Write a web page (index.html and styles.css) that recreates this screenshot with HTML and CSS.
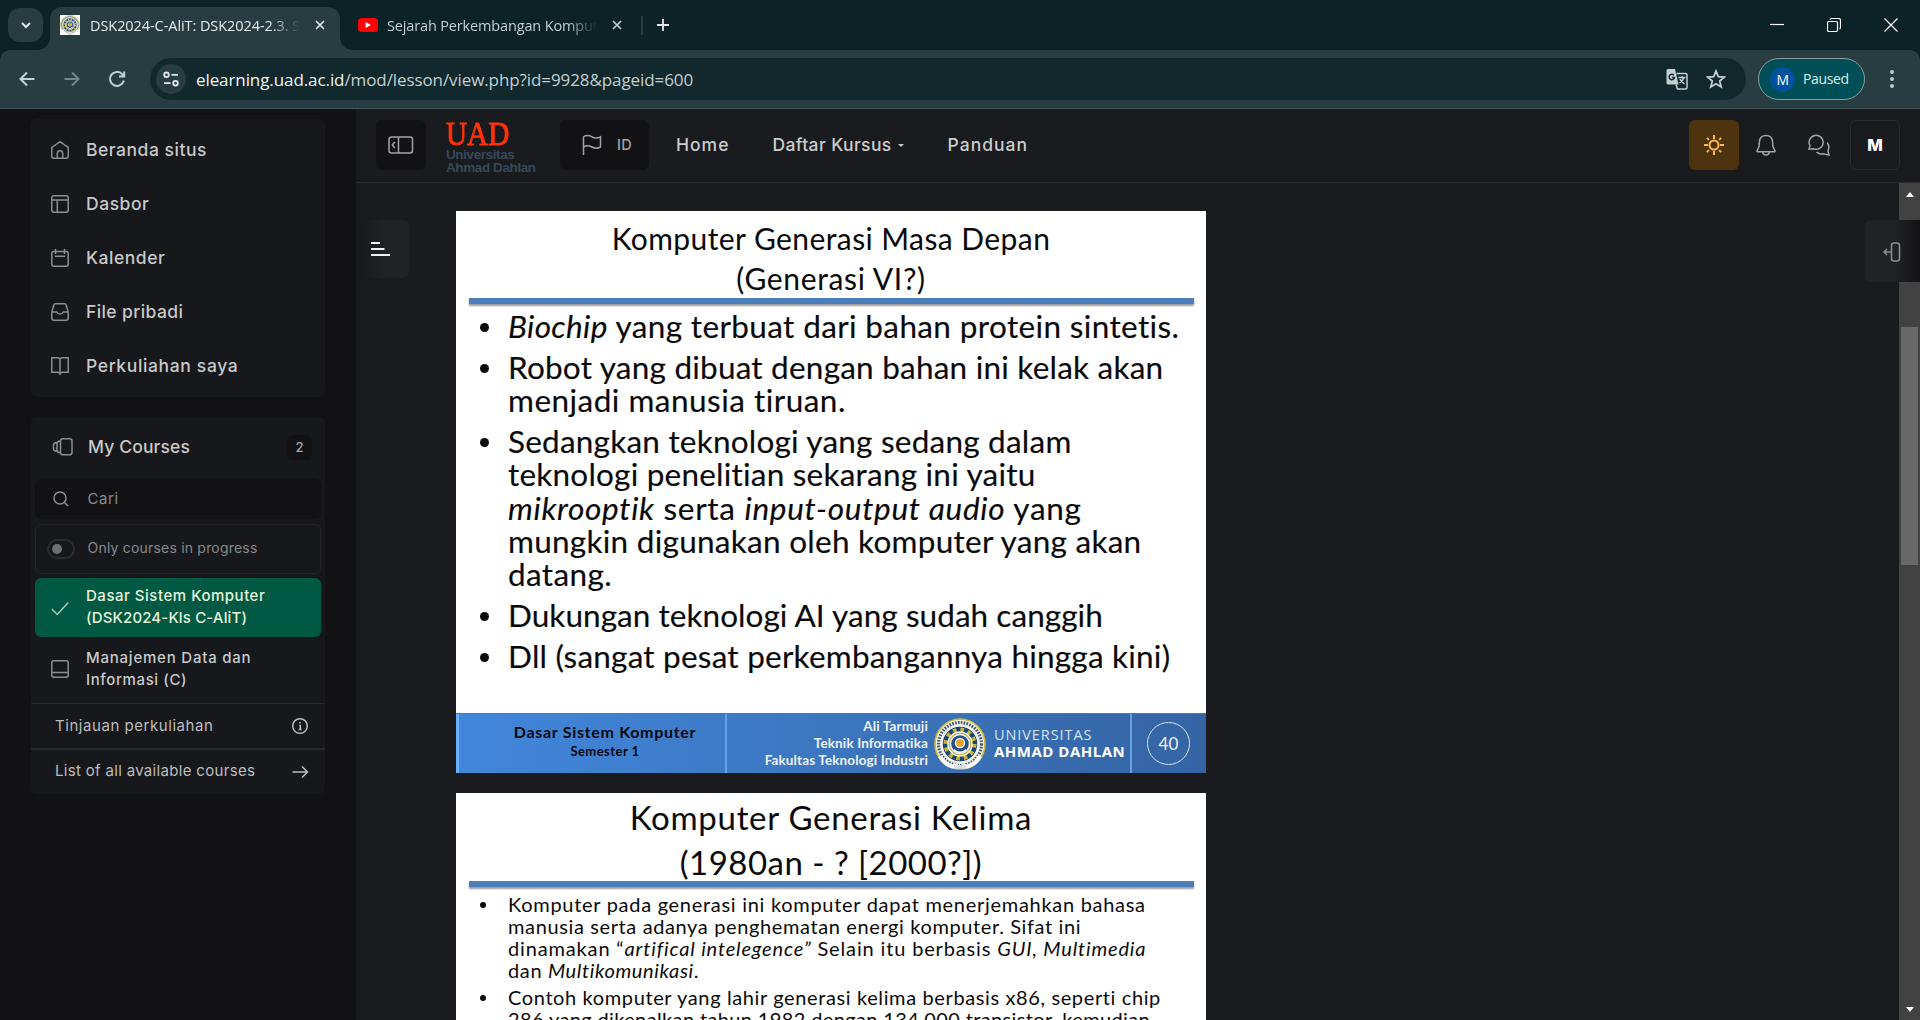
FILE: index.html
```html
<!DOCTYPE html>
<html lang="id">
<head>
<meta charset="utf-8">
<title>DSK2024-C-AliT: DSK2024-2.3.</title>
<link rel="stylesheet" href="styles.css">
</head>
<body>
<svg class="defs" width="0" height="0">
  <symbol id="emblem" viewBox="0 0 52 52">
    <circle cx="26" cy="26" r="25" fill="#f4f3df" stroke="#c9b93c" stroke-width="1.6"/>
    <circle cx="26" cy="26" r="21.5" fill="none" stroke="#3c5580" stroke-width="3.2" stroke-dasharray="1.6 1.3"/>
    <circle cx="26" cy="26" r="18" fill="#1d4370"/>
    <circle cx="26" cy="26" r="14" fill="none" stroke="#c9b534" stroke-width="5" stroke-dasharray="3.5 3.83"/>
    <circle cx="26" cy="26" r="12" fill="#c9b534"/>
    <circle cx="26" cy="26" r="9.5" fill="#23508a"/>
    <circle cx="26" cy="25" r="4.5" fill="#e9a21c"/>
    <path d="M20 31q6 5 12 0v2q-6 4-12 0z" fill="#fff" stroke="none"/>
    <path d="M6 38q5 10 16 11v-3M46 38q-5 10-16 11v-3" fill="none" stroke="#fff" stroke-width="4"/>
    <path d="M20 47h12v4H20z" fill="#d8dde4" stroke="none"/>
  </symbol>
</svg>
<div class="tabs">
  <div class="tabsearch"><svg width="12" height="12" viewBox="0 0 12 12"><path d="M2 4l4 4 4-4"/></svg></div>
  <div class="tab active">
    <svg class="fav" width="20" height="20" viewBox="0 0 52 52"><path fill="#fff" stroke="none" d="M0 0h52v52H0z"/><use href="#emblem"/></svg>
    <span class="title"><span class="t">DSK2024-C-AliT: DSK2024-2.3. S</span></span>
    <svg class="x" width="10" height="10" viewBox="0 0 10 10"><path d="M1 1l8 8M9 1L1 9"/></svg>
  </div>
  <div class="tab">
    <svg class="fav" width="20" height="14" viewBox="0 0 20 14"><rect width="20" height="14" rx="3.5" fill="#f00" stroke="none"/><path d="M7.6 4v6L13 7z" fill="#fff" stroke="none"/></svg>
    <span class="title"><span class="t">Sejarah Perkembangan Komput</span></span>
    <svg class="x" width="10" height="10" viewBox="0 0 10 10"><path d="M1 1l8 8M9 1L1 9"/></svg>
  </div>
  <i class="tabsep"></i>
  <svg class="plus" width="14" height="14" viewBox="0 0 14 14"><path d="M7 1v12M1 7h12"/></svg>
  <div class="win">
    <svg width="14" height="14" viewBox="0 0 14 14"><path d="M0 6.5h14"/></svg>
    <svg width="14" height="14" viewBox="0 0 14 14"><rect x=".5" y="3.5" width="10" height="10" rx="1.5"/><path d="M3 1.5Q3.500.5 5 .5h6.500q2 0 2 2V9q0 1.500-1 2"/></svg>
    <svg width="14" height="14" viewBox="0 0 14 14"><path d="M.5.5l13 13M13.500.5l-13 13"/></svg>
  </div>
</div>
<div class="toolbar">
  <svg class="nav" width="20" height="20" viewBox="0 0 20 20"><path d="M17.500 10H3.500M10 3.500L3.500 10l6.500 6.500"/></svg>
  <svg class="nav dim" width="20" height="20" viewBox="0 0 20 20"><path d="M2.500 10h14M10 3.500l6.500 6.500-6.500 6.500"/></svg>
  <svg class="nav" width="20" height="20" viewBox="0 0 20 20"><path d="M16.800 11.500a7 7 0 1 1-1.600-6.300l1.800 1.800M17.200 2.500V7.500H12"/></svg>
  <div class="omni">
    <span class="site"><svg width="16" height="16" viewBox="0 0 16 16"><circle cx="3.500" cy="3.800" r="2.300"/><circle cx="12.500" cy="12.200" r="2.300"/><path d="M8.500 3.800H15M1 12.200h6.500"/></svg></span>
    <span class="url"><span class="t"><b>elearning.uad.ac.id</b>/mod/lesson/view.php?id=9928&amp;pageid=600</span></span>
    <svg class="trans" width="22" height="22" viewBox="0 0 22 22"><path d="M2 1h7l3.500 15.500H2q-1.500 0-1.500-1.500V2.500Q.5 1 2 1z" fill="#c4cfd1" stroke="none"/><path d="M10.500 5.500h9q1.500 0 1.500 1.500v12.500q0 1.500-1.500 1.500h-8l-1.500-4.500M12.500 9.500h7M16 8v1.500M18 9.500q-1 3-4.500 5.500M14 11q1 2.500 4.500 5"/><path class="g" d="M7.800 7.200A2.700 2.700 0 1 0 8.500 9.500H6"/></svg>
    <svg class="star" width="20" height="20" viewBox="0 0 20 20"><path d="M10 2l2.300 5.600 6 .5-4.600 3.900 1.400 5.900L10 14.700l-5.100 3.200 1.400-5.900L1.700 8.100l6-.5z"/></svg>
  </div>
  <div class="profile"><i>M</i><span class="t">Paused</span></div>
  <div class="dots"><i></i><i></i><i></i></div>
</div>
<div class="page">
  <aside>
    <nav class="card menu">
      <a><svg width="20" height="20" viewBox="0 0 20 20"><path d="M1.800 7.500L10 1.600l8.200 5.900v8.800q0 1.900-1.900 1.900H3.700q-1.900 0-1.900-1.900zM7.300 18v-4.500a2.700 2.700 0 0 1 5.400 0V18"/></svg><span class="t">Beranda situs</span></a>
      <a><svg width="20" height="20" viewBox="0 0 20 20"><rect x="1.800" y="1.800" width="16.400" height="16.400" rx="1.900"/><path d="M1.800 6h16.400M7.300 6v12"/></svg><span class="t">Dasbor</span></a>
      <a><svg width="20" height="20" viewBox="0 0 20 20"><rect x="1.800" y="3.400" width="16.400" height="14.800" rx="1.900"/><path d="M5.500 1v5M14.500 1v5M5 8.300h10"/></svg><span class="t">Kalender</span></a>
      <a><svg width="20" height="20" viewBox="0 0 20 20"><path d="M1.800 10l2-6.800q.4-1.400 1.800-1.400h8.800q1.400 0 1.800 1.400l2 6.800v6.300q0 1.900-1.900 1.900H3.700q-1.900 0-1.900-1.900zM1.800 10h5q1 2 3.200 2t3.200-2h5"/></svg><span class="t">File pribadi</span></a>
      <a><svg width="20" height="20" viewBox="0 0 20 20"><path d="M10 3v16M10 3q-1-1.200-2.500-1.200H1.800v14.500h5.700q1.800 0 2.500 1.500.7-1.500 2.500-1.500h5.700V1.800h-5.700Q11 1.800 10 3z"/></svg><span class="t">Perkuliahan saya</span></a>
    </nav>
    <section class="card courses">
      <h2><svg width="22" height="20" viewBox="0 0 22 20"><rect x="8.500" y="1.800" width="11.500" height="16" rx="2.200"/><path d="M8.500 4q-3.500 0-3.500 2.500v6.700q0 2.500 3.500 2.500M5 5.500q-3.500.2-3.500 2.500v3.800q0 2.300 3.500 2.500"/></svg><span class="t">My Courses</span><em>2</em></h2>
      <div class="search"><svg width="18" height="18" viewBox="0 0 18 18"><circle cx="8" cy="8" r="6"/><path d="M12.500 12.500L16 16"/></svg><span class="t">Cari</span></div>
      <div class="only"><i></i><span class="t">Only courses in progress</span></div>
      <a class="course on"><svg width="20" height="20" viewBox="0 0 20 20"><path d="M1.800 11l5.500 5.500L18.200 4.500"/></svg><span><span class="t">Dasar Sistem Komputer</span><span class="t">(DSK2024-Kls C-AliT)</span></span></a>
      <a class="course"><svg width="20" height="20" viewBox="0 0 20 20"><rect x="1.800" y="1.800" width="16.400" height="16.400" rx="1.900"/><path d="M1.800 13.500h16.400"/></svg><span><span class="t">Manajemen Data dan</span><span class="t">Informasi (C)</span></span></a>
      <a class="link"><span class="t">Tinjauan perkuliahan</span><svg width="18" height="18" viewBox="0 0 18 18"><circle cx="9" cy="9" r="7.300"/><path d="M8.300 8.500h1v4M9 5v1.600M7.600 12.500h3"/></svg></a>
      <a class="link last"><span class="t">List of all available courses</span><svg width="18" height="18" viewBox="0 0 18 18"><path d="M1.500 9h15M11 3.500L16.500 9 11 14.500"/></svg></a>
    </section>
  </aside>
  <main>
    <header>
      <div class="btn side"><svg width="26" height="18" viewBox="0 0 26 18"><rect x="1" y="1" width="23.500" height="16" rx="2.500"/><path d="M10.500 1v16M6.800 6L4.300 9l2.500 3"/></svg></div>
      <div class="logo"><b>UAD</b><span class="t">Universitas</span><span class="t">Ahmad Dahlan</span></div>
      <div class="btn lang"><svg width="20" height="22" viewBox="0 0 20 22"><path d="M1.500 21V2.800q4-2.500 8.500 0t8.500 0V13q-4 2.500-8.500 0t-8.500 0"/></svg><span class="t">ID</span></div>
      <span class="t home">Home</span>
      <span class="t daftar">Daftar Kursus</span><i class="caret"></i>
      <span class="t panduan">Panduan</span>
      <div class="right">
        <div class="sun"><svg width="22" height="22" viewBox="0 0 22 22"><circle cx="11" cy="11" r="4.500"/><path d="M11 1v4M11 17v4M1 11h4M17 11h4M3.900 3.900l2 2M16.100 16.100l2 2M3.900 18.100l2-2M16.100 5.900l2-2"/></svg></div>
        <svg class="bell" width="22" height="22" viewBox="0 0 22 22"><path d="M11 1.500q-6 0-6.500 6L4 12.500l-2 4.500q-.3.800.7.800h16.600q1 0 .7-.8l-2-4.500-.5-5q-.5-6-6.500-6zM7.500 18q.5 3 3.500 3t3.500-3"/></svg>
        <svg class="chat" width="22" height="22" viewBox="0 0 22 22"><path d="M1 15.200l1-3.600a7 7 0 1 1 3.400 3.100zM8.500 18q3 2.700 6.500 1.800l6 1.200-1-4q2-4.500-.8-8.500"/></svg>
        <div class="me">M</div>
      </div>
    </header>
    <div class="body">
      <div class="content">
        <article class="slide one">
          <h1><span class="t">Komputer Generasi Masa Depan</span><span class="t">(Generasi VI?)</span></h1>
          <hr>
          <ul>
            <li><p><span class="t a"><em>Biochip</em> yang terbuat dari bahan protein sintetis.</span></p></li>
            <li><p><span class="t b">Robot yang dibuat dengan bahan ini kelak akan</span><span class="t c">menjadi manusia tiruan.</span></p></li>
            <li><p><span class="t b">Sedangkan teknologi yang sedang dalam</span><span class="t b">teknologi penelitian sekarang ini yaitu</span><span class="t d"><em>mikrooptik</em> serta <em>input-output audio</em> yang</span><span class="t e">mungkin digunakan oleh komputer yang akan</span><span class="t a">datang.</span></p></li>
            <li><p><span class="t f">Dukungan teknologi AI yang sudah canggih</span></p></li>
            <li><p><span class="t b">Dll (sangat pesat perkembangannya hingga kini)</span></p></li>
          </ul>
          <footer>
            <div class="subject"><span class="t">Dasar Sistem Komputer</span><small>Semester 1</small></div>
            <div class="org">
              <div class="who"><span class="t">Ali Tarmuji</span><span class="t">Teknik Informatika</span><span class="t">Fakultas Teknologi Industri</span></div>
              <svg width="52" height="52"><use href="#emblem"/></svg>
              <div class="uni"><span class="t">UNIVERSITAS</span><b class="t">AHMAD DAHLAN</b></div>
            </div>
            <div class="num"><i>40</i></div>
          </footer>
        </article>
        <article class="slide two">
          <h1><span class="t">Komputer Generasi Kelima</span><span class="t">(1980an - ? [2000?])</span></h1>
          <hr>
          <ul>
            <li><p><span class="t a">Komputer pada generasi ini komputer dapat menerjemahkan bahasa</span><span class="t b">manusia serta adanya penghematan energi komputer. Sifat ini</span><span class="t c">dinamakan “<em>artifical intelegence”</em> Selain itu berbasis <em>GUI, Multimedia</em></span><span class="t b">dan <em>Multikomunikasi</em>.</span></p></li>
            <li><p><span class="t b">Contoh komputer yang lahir generasi kelima berbasis x86, seperti chip</span><span class="t d">286 yang dikenalkan tahun 1982 dengan 134.000 transistor, kemudian</span></p></li>
          </ul>
        </article>
      </div>
      <div class="scroll"><i class="up"></i><i class="thumb"></i><i class="down"></i></div>
    </div>
    <div class="drawer left"><svg width="20" height="14" viewBox="0 0 20 14"><path d="M0 1h9M0 7h13.500M0 13h19"/></svg></div>
    <div class="drawer rgt"><svg width="18" height="20" viewBox="0 0 18 20"><rect x="8.500" y="1" width="8" height="18" rx="2.500"/><path d="M8 10H1M4 7l-3 3 3 3"/></svg></div>
  </main>
</div>
</body>
</html>
```
FILE: styles.css
```css
*{box-sizing:border-box}
body{margin:0;width:1920px;height:1020px;overflow:hidden;background:#0b2226;font-family:Inter,"Liberation Sans",sans-serif;color:#c9c9c9}
svg{fill:none;stroke:currentColor;stroke-width:1.5;flex:none;display:block}
p{margin:0}
.t{white-space:pre;display:block;width:max-content}
i,em{font-style:normal}
.defs{position:absolute}

/* browser tab strip */
.tabs{height:50px;display:flex;align-items:flex-start;font:14.5px "Open Sans",sans-serif;color:#e3e9ea;padding-left:8px}
.tabsearch{width:35px;height:34px;margin:8px 7px 0 0;border-radius:12px;background:#283d41;display:flex;align-items:center;justify-content:center}
.tabsearch svg{stroke-width:2}
.tab{height:43px;margin-top:7px;display:flex;align-items:center;padding-left:10px;width:290px;padding-bottom:7px;position:relative;letter-spacing:-.07px}
.tab.active{background:#283d41;border-radius:12px 12px 0 0}
.tab.active:before,.tab.active:after{content:"";position:absolute;bottom:0;width:12px;height:12px}
.tab.active:before{left:-12px;background:radial-gradient(circle at 0 0,transparent 11.5px,#283d41 12px)}
.tab.active:after{right:-12px;background:radial-gradient(circle at 100% 0,transparent 11.5px,#283d41 12px)}
.tab+.tab{padding-left:18px;width:301px;color:#bfd0d3;letter-spacing:-.15px}
.title{width:210px;margin:0 15px 0 10px;overflow:hidden;-webkit-mask:linear-gradient(90deg,#000 180px,transparent 210px);mask:linear-gradient(90deg,#000 180px,transparent 210px)}
.tab+.tab .title{margin-left:9px}
.x{stroke-width:1.7}
.tabsep{width:2px;height:19px;background:#283d41;margin-top:16px}
.plus{margin:18px 0 0 13px;stroke-width:1.8}
.win{margin:18px 22px 0 auto;display:flex;gap:43px;color:#fff}
.win svg{stroke-width:1.2}

/* browser toolbar */
.toolbar{height:59px;background:#283d41;border-bottom:1px solid #45575a;border-radius:10px 10px 0 0;display:flex;align-items:center;padding-left:17px;color:#c4cfd1}
.nav{margin-right:25px;stroke-width:2;color:#c0d4d7}
.nav.dim{color:#71858a}
.omni{width:1596px;height:42px;margin-left:-2px;border-radius:21px;background:#11292d;display:flex;align-items:center;padding:0 20px 0 6px}
.site{width:30px;height:30px;border-radius:50%;background:#283d41;display:flex;align-items:center;justify-content:center;margin-right:10px;color:#e3e9ea}
.site svg{stroke-width:1.8}
.url{font:17px "Open Sans",sans-serif;letter-spacing:-.09px;flex:1;color:#c3cfd1}
.url b{font-weight:400;color:#f1f5f5}
.trans{margin-right:1px}
.g{stroke:#11292d;stroke-width:1.5}
.star{margin-left:17px;stroke-width:1.8}
.profile{width:107px;height:42px;margin-left:12px;border:1px solid #899da0;border-radius:21px;background:#004f56;display:flex;align-items:center;padding-left:11px;gap:8px;font:14px "Open Sans",sans-serif;letter-spacing:-.35px;color:#d5eef0}
.profile i{width:25px;height:25px;border-radius:50%;background:#00529e;color:#fff;display:flex;align-items:center;justify-content:center}
.profile .t{margin-top:-2px}
.dots{margin-left:25px;display:grid;gap:3px}
.dots i{width:4px;height:4px;border-radius:50%;background:#bccbcd}

/* site sidebar */
.page{display:flex;height:911px;background:#121214}
aside{width:356px;padding:10px 31px;flex:none}
.card{background:#17181b;border-radius:6px}
.menu{height:278px;padding:4px 21px;margin-bottom:20px}
.menu a{height:54px;display:flex;align-items:center;gap:15px;font-size:17.5px;letter-spacing:.53px;font-weight:500;color:#c8c8c9}
.menu a:nth-child(4){letter-spacing:.4px}
.menu a:nth-child(5){letter-spacing:.64px}
.menu .t,h2 .t{margin-top:-2px}
.card svg{color:#8e8e90}
.menu svg{margin-left:-2px;margin-right:1px}
.courses{height:377px;padding:0 4px}
h2{margin:0;height:62px;display:flex;align-items:center;padding:0 9px 2px 17px;gap:14px;font-size:17.5px;letter-spacing:.14px;font-weight:500}
h2 em{margin-left:auto;width:25px;height:25px;border-radius:6px;background:#121214;font-size:13px;color:#a5a5a7;display:flex;align-items:center;justify-content:center}
.search{height:40px;border-radius:6px;background:#121214;display:flex;align-items:center;padding:0 0 1px 17px;gap:17.5px;font-size:15px;letter-spacing:.6px;color:#8b8b8d}
.only{height:50px;border:1px solid #232427;border-radius:6px;margin:5px 0 4px;display:flex;align-items:center;padding:0 0 1px 11px;gap:12.5px;font-size:14px;letter-spacing:.2px;color:#88888a}
.only .t{margin-top:-2px}
.only i{width:28px;height:20px;border:2px solid #2c2d30;border-radius:10px;padding:3px}
.only i:before{content:"";display:block;width:10px;height:10px;border-radius:50%;background:#6f6f70}
.course{height:59px;display:flex;align-items:center;padding-left:15px;gap:16px;font-size:15px;line-height:22px;letter-spacing:.78px;font-weight:500;border-radius:6px}
.course .t+.t{letter-spacing:.62px}
.course.on{background:#005943;color:#e8f3d9;margin-bottom:2px;letter-spacing:.52px}
.course.on .t+.t{letter-spacing:.14px}
.course.on svg{color:#a8cdb5}
.course.on>span{margin-top:-1px}
.link{margin:5px -4px 0;height:45px;border-top:1px solid #26272a;display:flex;align-items:center;justify-content:space-between;padding:0 16px 0 24px;font-size:15px;letter-spacing:.55px;color:#bdbdbe}
.link .t{margin-top:-2px}
.link svg{color:#bdbdbe}
.link.last{margin-top:0;border-top:2px solid #26272a;letter-spacing:.32px}

/* site header */
main{flex:1;background:#1a1b1f;display:flex;flex-direction:column;position:relative}
header{height:74px;border-bottom:1px solid #2b2d31;display:flex;align-items:center;padding:0 0 1px 20px;font-size:17.5px;letter-spacing:1px;font-weight:500;color:#cbcbcc;flex:none}
header>.t,.lang .t{margin-top:-2px}
.btn{height:50px;background:#121214;border-radius:6px;display:flex;align-items:center;color:#a2a2a5}
.side{width:50px;padding-left:12px}
.logo{width:114px;margin-left:20px;font:700 13.5px/12.5px "Liberation Sans",sans-serif;color:#384857;letter-spacing:-.4px;padding-top:3px}
.logo b{display:block;width:max-content;font:34px/30px "Liberation Serif",serif;letter-spacing:0;color:#ff3209;-webkit-text-stroke:.9px #ff3209;height:30px;transform:scaleX(.86);transform-origin:0 0}
.lang{width:89px;padding-left:22px;gap:15px;font-size:14.5px;letter-spacing:.4px}
.home{margin-left:27px}
.daftar{margin-left:43px;letter-spacing:.39px}
.caret{border:3px solid transparent;border-top:3.5px solid #cbcbcc;border-bottom:0;margin:0 44px 0 6px}
.right{margin-left:auto;display:flex;align-items:center;padding-right:20px;color:#a4a4a7;letter-spacing:0}
.sun{width:50px;height:50px;border-radius:6px;background:#4d340e;color:#ffba4c;display:flex;align-items:center;justify-content:center}
.sun svg{stroke-width:2}
.bell{margin:0 31px 0 16px}
.chat{margin-right:20px}
.me{width:50px;height:50px;border:1px solid #2b2c30;border-radius:6px;display:flex;align-items:center;justify-content:center;font-size:16.5px;font-weight:800;color:#fff}

/* lesson area */
.body{flex:1;min-height:0;display:flex;overflow:hidden}
.content{flex:1;padding:28px 0 0 100px;height:837px;overflow:hidden}
.scroll{width:21px;background:#424242;display:flex;flex-direction:column;align-items:center}
.up,.down{border:4.5px solid transparent}
.up{border-bottom:5px solid #fff;border-top:0;margin-top:9px}
.thumb{width:17px;height:238px;background:#686868;margin-top:130px}
.down{border-top:5px solid #fff;border-bottom:0;margin:auto 0 8px}
.drawer{position:absolute;top:111px;display:flex;align-items:center}
.drawer.left{left:0;width:53px;height:58px;border-radius:0 6px 6px 0;background:linear-gradient(90deg,#18191c,#212226 30px);padding-left:15px;color:#f0f0f0}
.drawer.left svg{stroke-width:2}
.drawer.rgt{right:0;width:55px;height:62px;border-radius:6px 0 0 6px;background:linear-gradient(90deg,#212226 30px,#121214);padding:2px 0 0 18px;color:#8e8e90}

/* slides */
.slide{width:750px;height:562px;background:#fff;color:#0a0a0a;font-family:Lato,sans-serif;margin-bottom:20px;display:flex;flex-direction:column}
.slide h1{margin:0;font-weight:400;display:flex;flex-direction:column;align-items:center}
.slide hr{width:725px;height:6px;border:0;background:#4a7ebb;margin:0 12px 0 13px;box-shadow:0 2px 2px #0006;flex:none}
.slide ul{list-style:none;margin:0;padding:0}
.slide li{display:flex;padding-left:24px}
.slide li:before{content:"";border-radius:50%;background:#0a0a0a;flex:none}
.slide em{font-style:italic}
.one h1{height:87px;font-size:30px;line-height:40px;padding-top:7px;letter-spacing:.42px}
.one h1 .t+.t{letter-spacing:.66px}
.one ul{padding-top:6px;font-size:31.5px;line-height:33.2px;flex:1;-webkit-text-stroke:.15px}
.one li{margin-bottom:7.8px}
.one li:before{width:9px;height:9px;margin:13px 19px 0 0}
.one .a{letter-spacing:.37px}
.one .b{letter-spacing:.22px}
.one .c{letter-spacing:.48px}
.one .d{letter-spacing:.7px}
.one .e{letter-spacing:.27px}
.one .f{letter-spacing:.05px}
.two{margin:0}
.two h1{height:88px;font-size:33px;line-height:44.5px;padding-top:2px;letter-spacing:.7px}
.two h1 .t+.t{letter-spacing:.47px}
.two ul{padding-top:6px;font-size:20px;line-height:22px}
.two li{margin-bottom:5px}
.two li:before{width:6px;height:6px;margin:9px 22px 0 0}
.two .a{letter-spacing:.71px}
.two .b{letter-spacing:.62px}
.two .c{letter-spacing:.85px}
.two .d{letter-spacing:.37px}
.slide footer{height:60px;display:flex;border-top:1px solid #6a7486;background:linear-gradient(90deg,#4187dc,#3c76bf 50%,#3464a4);font-size:13.5px;line-height:17.3px;letter-spacing:.13px;font-weight:700;color:#eef3fa}
.subject{width:269px;border-left:3px solid #69b1f8;display:flex;flex-direction:column;align-items:center;color:#05080f;font-size:16px;line-height:19px;letter-spacing:.69px;padding:8px 0 0 26px}
.subject small{font-size:13px;letter-spacing:.46px;margin-top:1px}
.org{width:405px;border-left:2px solid #64a2e8;display:flex;justify-content:flex-end;align-items:center}
.who{display:flex;flex-direction:column;align-items:flex-end}
.org svg{margin:0 8px 0 6px}
.uni{width:136px;font:400 14.5px/16px "Open Sans",sans-serif;letter-spacing:.92px;color:#d6e3f3;margin-top:-2px}
.uni b{font-size:15px;letter-spacing:.5px;color:#fff}
.num{flex:1;border-left:2px solid #64a2e8;display:flex;align-items:center;padding-left:15px}
.num i{width:43px;height:43px;border:1.5px solid #d6e3f3;border-radius:50%;font-size:17px;font-weight:400;display:flex;align-items:center;justify-content:center}
```
